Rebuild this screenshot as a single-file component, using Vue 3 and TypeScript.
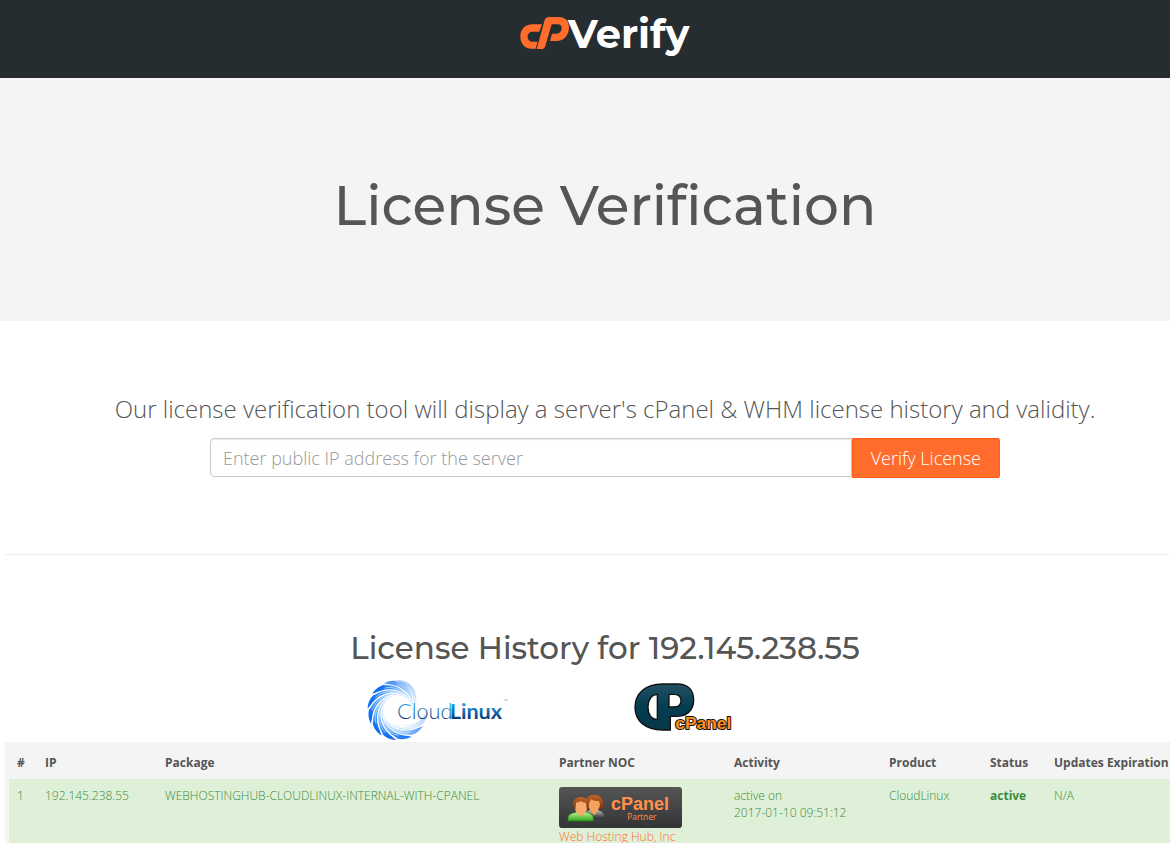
<script setup lang="ts">
import { ref } from 'vue'

interface LicenseRow {
  id: number
  ip: string
  pkg: string
  partner: string
  state: string
  date: string
  product: string
  status: string
  expiration: string
}

const address = ref('')

const columns: string[] = ['#', 'IP', 'Package', 'Partner NOC', 'Activity', 'Product', 'Status', 'Updates Expiration']
const columnClasses: string[] = ['num', 'ip', 'package', 'noc', 'activity', 'product', 'status', 'updates']

const rows: LicenseRow[] = [
  {
    id: 1,
    ip: '192.145.238.55',
    pkg: 'WEBHOSTINGHUB-CLOUDLINUX-INTERNAL-WITH-CPANEL',
    partner: 'Web Hosting Hub, Inc',
    state: 'active on',
    date: '2017-01-10 09:51:12',
    product: 'CloudLinux',
    status: 'active',
    expiration: 'N/A',
  },
]

const blades = [
  { angle: -150, opacity: 0.25 },
  { angle: -120, opacity: 0.6 },
  { angle: -90, opacity: 0.9 },
  { angle: -60, opacity: 1 },
  { angle: -30, opacity: 1 },
  { angle: 0, opacity: 1 },
  { angle: 30, opacity: 1 },
  { angle: 60, opacity: 1 },
  { angle: 90, opacity: 0.7 },
  { angle: 115, opacity: 0.35 },
]
</script>

<template>
  <div class="page">
    <header class="topbar">
      <a href="#" aria-label="cPVerify">
        <svg class="brand" viewBox="30 8 510 159">
          <path fill="#ff6c2c" d="M96 57H68C45 57 31 73 31 94s14 36 33 36h13l6-21H68c-9 0-15-6-15-15s6-15 15-15h20Z" />
          <path fill="#ff6c2c" d="M118 35h28c20 0 31 13 31 30 0 25-15 42-37 42h-20l6-22h14c9 0 15-7 15-17 0-7-4-11-11-11h-19l-20 68q-2 6-8 6H80l24-87q3-9 14-9Z" />
          <text class="brand-text" x="174" y="129">Verify</text>
        </svg>
      </a>
    </header>

    <section class="hero">
      <h1>License Verification</h1>
    </section>

    <main>
      <section class="lookup">
        <label class="lead" for="address">Our license verification tool will display a server's cPanel &amp; WHM license history and validity.</label>
        <form class="search" @submit.prevent>
          <input id="address" v-model="address" type="text" placeholder="Enter public IP address for the server" />
          <button type="submit">Verify License</button>
        </form>
      </section>

      <section class="history">
        <h2>License History for 192.145.238.55</h2>
        <div class="products">
          <svg class="cloudlinux" viewBox="21 26 426 186" role="img" aria-label="CloudLinux">
            <defs>
              <linearGradient id="blade" gradientUnits="userSpaceOnUse" x1="-86" y1="10" x2="10" y2="-50">
                <stop offset="0" stop-color="#0f6cf2" />
                <stop offset="0.35" stop-color="#58a6fa" />
                <stop offset="1" stop-color="#e4f4ff" />
              </linearGradient>
              <linearGradient id="word" x1="0" y1="0" x2="0" y2="1">
                <stop offset="0.3" stop-color="#1d9ad6" />
                <stop offset="0.8" stop-color="#0a3c7c" />
              </linearGradient>
            </defs>
            <g transform="translate(113 119)">
              <g v-for="b in blades" :key="b.angle" :transform="`rotate(${b.angle})`" :opacity="b.opacity">
                <path fill="url(#blade)" d="M-80 42C-104 -4 -70 -56 18 -46C-38 -46 -72 -14 -80 42Z" />
                <path fill="none" stroke="#fff" stroke-width="4" stroke-linecap="round" d="M-76 38C-76 -10 -46 -52 18 -46" />
                <path fill="none" stroke="#fff" stroke-width="2" stroke-linecap="round" opacity="0.7" d="M-76 0C-68 -30 -34 -52 10 -48" />
              </g>
            </g>
            <text class="cl-light" x="111" y="145" fill="url(#word)">Cloud</text>
            <text class="cl-bold" x="269" y="145" fill="url(#word)">Linux</text>
            <text class="cl-tm" x="432" y="99">™</text>
          </svg>

          <svg class="cpanel" viewBox="27 22 300 153" role="img" aria-label="cPanel">
            <defs>
              <linearGradient id="teal" x1="0" y1="0" x2="0" y2="1">
                <stop offset="0" stop-color="#245064" />
                <stop offset="0.5" stop-color="#043d50" />
                <stop offset="1" stop-color="#06384a" />
              </linearGradient>
            </defs>
            <path
              fill="url(#teal)"
              stroke="#111"
              stroke-width="4"
              fill-rule="evenodd"
              d="M112 25h45c34 0 49 20 49 48 0 30-19 49-52 49h-18v41h-24C61 163 30 136 30 95s31-70 82-70ZM97 56c-19 2-28 17-28 38s9 36 28 38ZM132 56v38h14c15 0 22-7 22-19s-7-19-22-19Z"
            />
            <text class="cp-word" x="151" y="160">cPanel</text>
          </svg>
        </div>

        <div class="panel">
          <table>
            <colgroup>
              <col v-for="name in columnClasses" :key="name" :class="name" />
            </colgroup>
            <thead>
              <tr>
                <th v-for="name in columns" :key="name" scope="col">{{ name }}</th>
              </tr>
            </thead>
            <tbody>
              <tr v-for="row in rows" :key="row.id">
                <td>{{ row.id }}</td>
                <td>{{ row.ip }}</td>
                <td>{{ row.pkg }}</td>
                <td>
                  <a class="partner" href="#">
                    <svg class="badge" viewBox="0 0 369 123" aria-hidden="true">
                      <defs>
                        <linearGradient id="plate" x1="0" y1="0" x2="0" y2="1">
                          <stop offset="0" stop-color="#555" />
                          <stop offset="1" stop-color="#333436" />
                        </linearGradient>
                        <linearGradient id="shirt" x1="0" y1="0" x2="0" y2="1">
                          <stop offset="0" stop-color="#c7f5a0" />
                          <stop offset="1" stop-color="#2da81a" />
                        </linearGradient>
                        <linearGradient id="vest" x1="0" y1="0" x2="0" y2="1">
                          <stop offset="0" stop-color="#bbb" />
                          <stop offset="1" stop-color="#303030" />
                        </linearGradient>
                        <linearGradient id="hair" x1="0" y1="0" x2="0" y2="1">
                          <stop offset="0" stop-color="#c06426" />
                          <stop offset="1" stop-color="#753009" />
                        </linearGradient>
                      </defs>
                      <rect width="369" height="123" rx="10" fill="url(#plate)" />
                      <path d="M76 94V80q8-9 18-11h20q18 3 21 16v9Z" fill="url(#vest)" />
                      <path d="M92 69l14 16 12-16Z" fill="#f5a15e" />
                      <ellipse cx="105" cy="51" rx="18" ry="23" fill="#f5a15e" />
                      <path d="M84 57c-8-22 4-34 21-34 20 0 30 14 27 34-1 8 0 12-6 14l-5-28c-12 0-19-3-25-6-3 7-6 12-12 20Z" fill="url(#hair)" />
                      <path d="M27 102V91q3-12 19-14l9-3h22l11 3q13 4 15 15v10Z" fill="url(#shirt)" stroke="#267a18" stroke-width="2" />
                      <path d="M52 74l14 16 14-16Z" fill="#f79c5b" />
                      <ellipse cx="66" cy="59" rx="19" ry="24" fill="#f7aa6b" />
                      <path d="M45 64c-8-20 3-34 21-34s28 13 22 34l-4 6-3-23c-6 0-12-2-16-5-5 4-10 5-14 5l-2 22Z" fill="url(#hair)" />
                      <text class="badge-name" x="156" y="68">cPanel</text>
                      <text class="badge-role" x="205" y="98">Partner</text>
                    </svg>
                    {{ row.partner }}
                  </a>
                </td>
                <td>{{ row.state }}<br />{{ row.date }}</td>
                <td>{{ row.product }}</td>
                <td><strong>{{ row.status }}</strong></td>
                <td>{{ row.expiration }}</td>
              </tr>
            </tbody>
          </table>
        </div>
      </section>
    </main>
  </div>
</template>

<style>
body {
  overflow-x: hidden;
  background: #fff;
}
</style>

<style scoped>
.page {
  min-width: 1210px;
  box-sizing: border-box;
  color: #555;
  font-family: 'Open Sans', 'Noto Sans', sans-serif;
  font-weight: 300;
}

.topbar {
  display: flex;
  justify-content: center;
  padding: 8px 0 17px;
  background: #262d30;
}

.brand {
  display: block;
  width: 170px;
  height: 53px;
}

.brand-text {
  fill: #fff;
  font-family: Montserrat, Lato, sans-serif;
  font-size: 120px;
  font-weight: 700;
}

.hero {
  padding: 92px 0 79px;
  background: #f4f4f4;
  text-align: center;
}

h1,
h2 {
  margin: 0;
  font-family: Montserrat, Inter, sans-serif;
  font-weight: 500;
}

h1 {
  font-size: 55px;
  line-height: 72px;
}

main {
  padding: 0 5px;
}

.lookup {
  padding: 71px 0 76px;
  border-bottom: 1px solid #eee;
  text-align: center;
}

.lead {
  display: block;
  font-size: 24px;
  line-height: 34px;
}

.search {
  display: flex;
  align-items: flex-start;
  max-width: 790px;
  margin: 12px auto 0;
}

.search input,
.search button {
  box-sizing: border-box;
  height: 40px;
  margin: 0;
  font-family: inherit;
  font-size: 18px;
  font-weight: 300;
}

.search input {
  flex: 1;
  min-width: 0;
  height: 39px;
  padding: 0 12px;
  border: 1px solid #ccc;
  border-radius: 4px 0 0 4px;
  background: #fff;
  box-shadow: inset 0 1px 1px rgba(0, 0, 0, 0.08);
  color: #555;
}

.search input::placeholder {
  color: #999;
  opacity: 1;
}

.search button {
  padding: 0 18px;
  border: 1px solid #ff5e13;
  border-radius: 0 2px 2px 0;
  background: #ff6c2c;
  color: #fff;
}

.history {
  padding-top: 73px;
}

h2 {
  font-size: 31px;
  line-height: 40px;
  text-align: center;
}

.products {
  display: flex;
  justify-content: center;
  align-items: center;
  gap: 125px;
  padding: 11px 0 1px;
  margin-right: 110px;
}

.cloudlinux {
  width: 142px;
  height: 62px;
}

.cl-light,
.cl-bold {
  font-family: Lato, sans-serif;
  font-size: 65px;
  font-weight: 300;
}

.cl-bold {
  font-weight: 700;
}

.cl-tm {
  fill: #267daf;
  font-size: 15px;
}

.cpanel {
  width: 100px;
  height: 51px;
  margin-bottom: 4px;
}

.cp-word {
  fill: #ff9023;
  stroke: #111;
  stroke-width: 6px;
  stroke-linejoin: round;
  paint-order: stroke;
  font-family: 'Liberation Sans', sans-serif;
  font-size: 52px;
  font-weight: 700;
}

.panel {
  border-left: 4px solid #f4f4f4;
}

table {
  width: 100%;
  border-collapse: collapse;
  table-layout: fixed;
  font-size: 12px;
  line-height: 17px;
}

.num { width: 28px; }
.ip { width: 120px; }
.package { width: 394px; }
.noc { width: 175px; }
.activity { width: 155px; }
.product { width: 101px; }
.status { width: 64px; }

th,
td {
  padding: 8px;
  text-align: left;
  vertical-align: top;
}

th {
  padding-top: 12px;
  background: #f4f4f4;
  font-weight: 700;
  white-space: nowrap;
}

td {
  background: #dff0d8;
  color: #3c8b3d;
}

td strong {
  font-weight: 700;
}

.partner {
  color: #ff6c2c;
  text-decoration: none;
}

.badge {
  display: block;
  width: 123px;
  height: 41px;
}

.badge-name {
  fill: #ff914b;
  font-family: 'Liberation Sans', sans-serif;
  font-size: 54px;
  font-weight: 700;
}

.badge-role {
  fill: #ff914b;
  font-size: 25px;
  font-weight: 400;
}
</style>
